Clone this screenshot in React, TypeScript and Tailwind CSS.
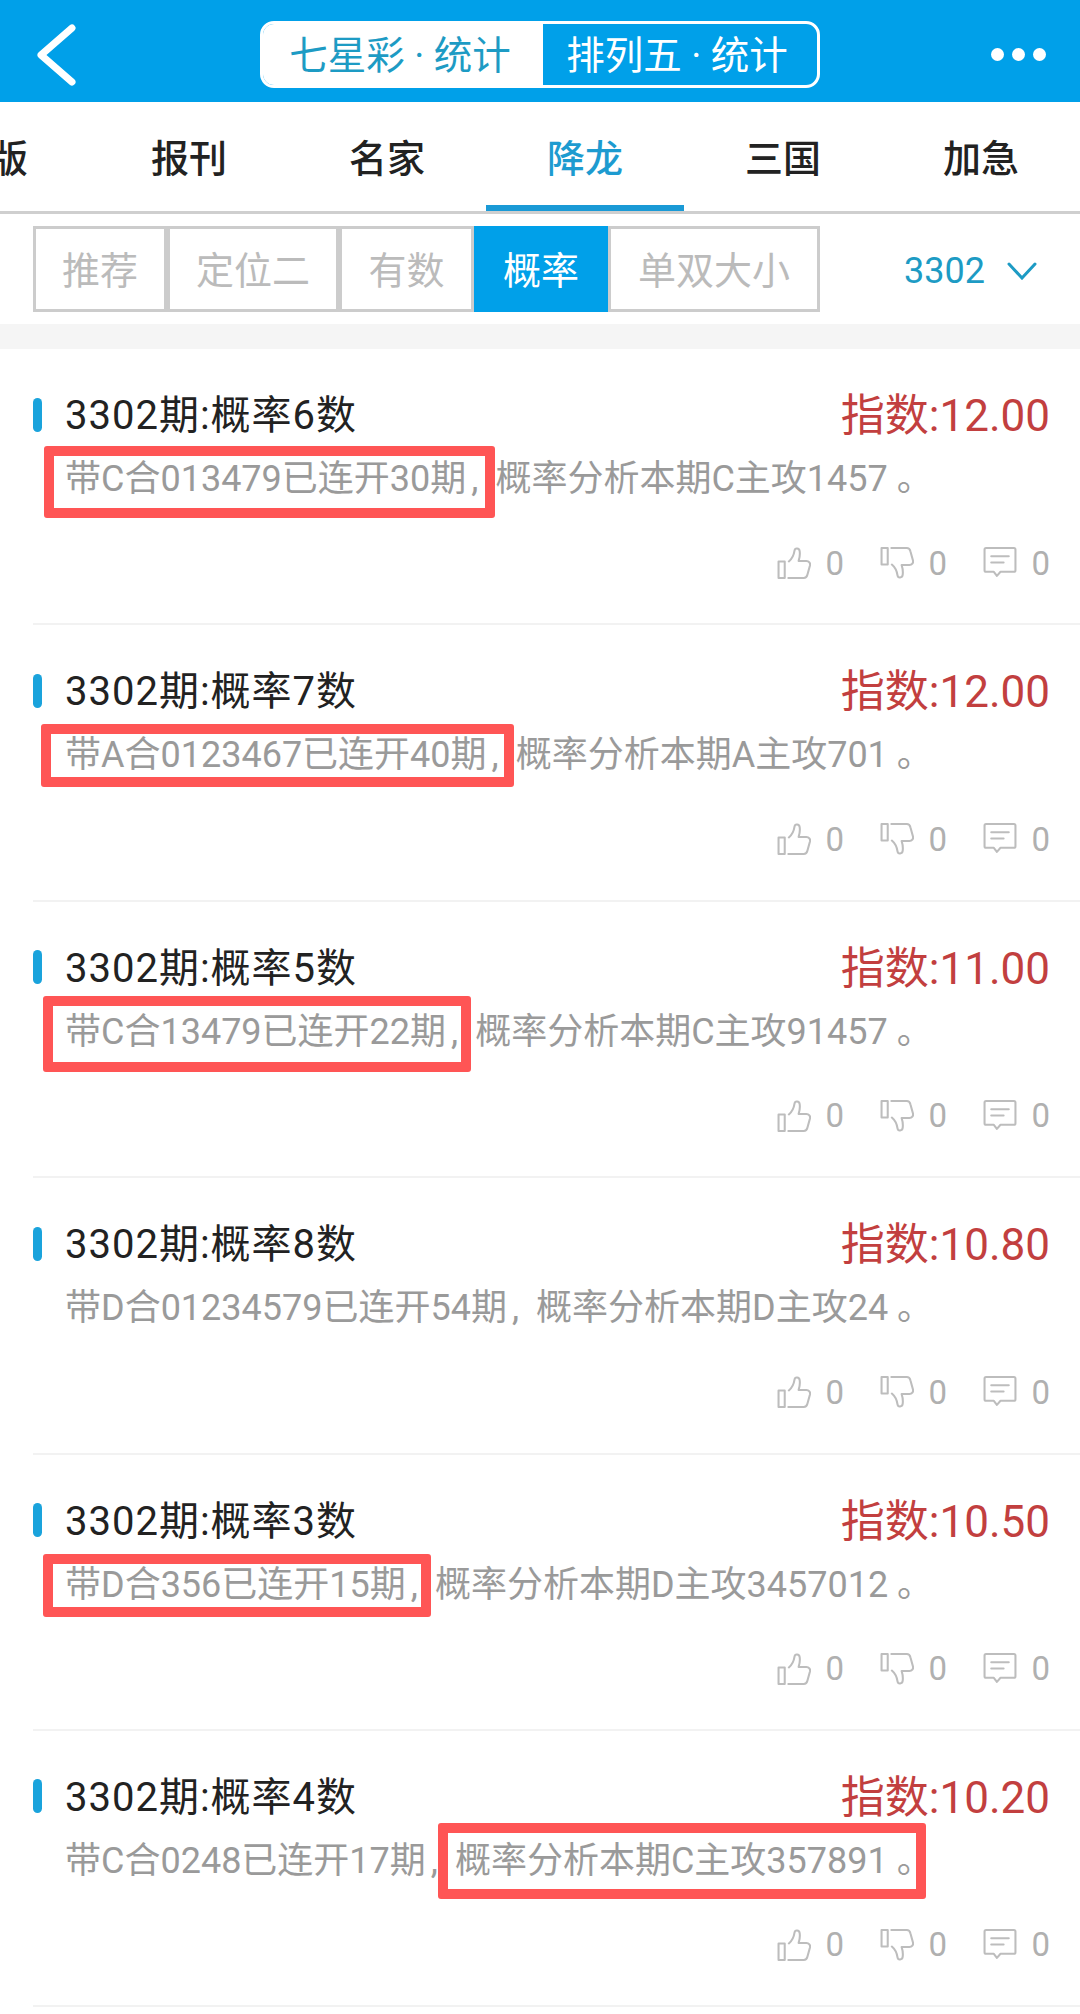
const cjk = "font-['Roboto','Noto_Sans_CJK_SC',sans-serif]";

const subTabs = [
  { label: '推荐', width: 'w-[134px]' },
  { label: '定位二', width: 'w-[172px]' },
  { label: '有数', width: 'w-[135px]' },
  { label: '概率', width: 'w-[134px]', active: true },
  { label: '单双大小', width: 'w-[212px]' },
];

const items = [
  { title: '3302期:概率6数', score: '12.00', lead: '带C合013479已连开30期', rest: '概率分析本期C主攻1457 。', mark: 'lead', box: 'top-[-12px] bottom-[-18px] left-[-21px] right-0' },
  { title: '3302期:概率7数', score: '12.00', lead: '带A合0123467已连开40期', rest: '概率分析本期A主攻701 。', mark: 'lead', box: 'top-[-10px] bottom-[-11px] left-[-24px] right-[2px]' },
  { title: '3302期:概率5数', score: '11.00', lead: '带C合13479已连开22期', rest: '概率分析本期C主攻91457 。', mark: 'lead', box: 'top-[-15px] bottom-[-19px] left-[-22px] right-[4px]' },
  { title: '3302期:概率8数', score: '10.80', lead: '带D合01234579已连开54期', rest: '概率分析本期D主攻24 。', mark: '', box: '' },
  { title: '3302期:概率3数', score: '10.50', lead: '带D合356已连开15期', rest: '概率分析本期D主攻3457012 。', mark: 'lead', box: 'top-[-10px] bottom-[-11px] left-[-22px] right-[4px]' },
  { title: '3302期:概率4数', score: '10.20', lead: '带C合0248已连开17期', rest: '概率分析本期C主攻357891 。', mark: 'rest', box: 'top-[-17px] bottom-[-17px] left-[-17px] right-[7px]' },
];

function ThumbUp({ flip }: { flip?: boolean }) {
  return (
    <svg width="34" height="34" viewBox="0 0 33 33" fill="none" stroke="#bdbdbd" strokeWidth="2" strokeLinejoin="round" strokeLinecap="round" className={flip ? '-scale-y-100' : ''}>
      <path d="M1.5 15h6v16h-6z" />
      <path d="M11 31h15c2 0 3-1 3.500-3l2.500-9c.6-2.500-1-4.500-3.500-4.500H21c1-3 1.500-6 1-9.500-.4-3-4.500-3.500-5-.5-.6 4-2.500 8-5.500 10.500" />
    </svg>
  );
}

function CommentIcon() {
  return (
    <svg width="34" height="34" viewBox="0 0 33 33" fill="none" stroke="#bdbdbd" strokeWidth="2" strokeLinejoin="round" strokeLinecap="round">
      <path d="M3 2h27c1 0 1.500.6 1.500 1.500v20c0 1-.6 1.500-1.500 1.500H17l-3.500 4-3-4H3c-1 0-1.500-.6-1.500-1.500v-20C1.500 2.600 2 2 3 2z" />
      <path d="M8 10h17M8 16h12" />
    </svg>
  );
}

function Stat({ icon }: { icon: React.ReactNode }) {
  return (
    <div className="flex w-[67px] items-center justify-between">
      {icon}
      <span className="text-[33px] leading-none text-[#b0b0b0]">0</span>
    </div>
  );
}

function Marked({ box, children }: { box: string; children: React.ReactNode }) {
  return (
    <span className="relative">
      {children}
      <span className={`absolute rounded-[3px] border-[10px] border-[#ff5555] ${box}`} />
    </span>
  );
}

export default function App() {
  return (
    <div className={`h-[2014px] w-[1080px] overflow-hidden bg-white ${cjk}`}>
      {/* top bar */}
      <header className="relative flex h-[102px] items-center justify-center bg-[#00a0e9]">
        <button className="absolute left-[36px] top-[24px]">
          <svg width="42" height="62" viewBox="0 0 42 62" fill="none" stroke="white" strokeWidth="7" strokeLinecap="round" strokeLinejoin="round">
            <path d="M36 4 5 31l31 27" />
          </svg>
        </button>
        <div className="mt-[6px] flex h-[67px] w-[560px] overflow-hidden rounded-[14px] border-[3px] border-white text-[38.500px] leading-none">
          <div className="flex w-[280px] items-center justify-center bg-white pr-[6px] pt-[4px] text-[#1d9bc4]">七星彩 · 统计</div>
          <div className="flex flex-1 items-center justify-center pr-[6px] pt-[4px] text-white">排列五 · 统计</div>
        </div>
        <div className="absolute right-[34px] top-[48px] flex gap-[8px]">
          <span className="h-[13px] w-[13px] rounded-full bg-white" />
          <span className="h-[13px] w-[13px] rounded-full bg-white" />
          <span className="h-[13px] w-[13px] rounded-full bg-white" />
        </div>
      </header>

      {/* channel tabs */}
      <nav className="flex h-[112px] overflow-hidden border-b-[3px] border-[#cfcfcf] pt-[4px] text-[38px] font-medium leading-none text-[#222]">
        <div className="flex w-[90px] shrink-0 items-center justify-end pr-[62px]">版</div>
        <div className="flex w-[198px] shrink-0 items-center justify-center">报刊</div>
        <div className="flex w-[198px] shrink-0 items-center justify-center">名家</div>
        <div className="relative flex w-[198px] shrink-0 items-center justify-center text-[#1d9bd0]">
          降龙
          <span className="absolute bottom-0 left-0 right-0 h-[6px] bg-[#1a9ad6]" />
        </div>
        <div className="flex w-[198px] shrink-0 items-center justify-center">三国</div>
        <div className="flex w-[198px] shrink-0 items-center justify-center">加急</div>
      </nav>

      {/* filter row */}
      <div className="flex h-[110px] items-start pl-[33px] pt-[12px]">
        <div className="flex h-[86px] w-[787px]">
          {subTabs.map((s) => (
            <div
              key={s.label}
              className={`flex items-center justify-center pt-[4px] text-[38px] leading-none ${s.width} ${s.active ? 'bg-[#00a0e9] text-white' : 'border-[3px] border-[#cccccc] text-[#bbbbbb]'}`}
            >
              {s.label}
            </div>
          ))}
        </div>
        <div className="ml-[84px] flex h-[86px] items-center gap-[22px] pt-[3px] text-[#1d9bc4]">
          <span className="text-[36px] leading-none">3302</span>
          <svg width="30" height="18" viewBox="0 0 30 18" fill="none" stroke="#1d9bc4" strokeWidth="3" strokeLinecap="round">
            <path d="M2 2l13 14L28 2" />
          </svg>
        </div>
      </div>
      <div className="h-[25px] bg-[#f5f5f5]" />

      {/* list */}
      <div className="pl-[33px]">
        {items.map((item) => {
          const lead = (
            <>
              {item.lead}
              <span className="ml-[5px] mr-[17px]">,</span>
            </>
          );
          return (
            <div key={item.title} className="h-[276.400px] border-b-2 border-[#f2f2f2] pr-[30px] pt-[47px]">
              <div className="flex h-[40px] items-center justify-between">
                <div className="flex items-center">
                  <span className="-mt-[3px] h-[34px] w-[9px] rounded-full bg-[#1aa3dc]" />
                  <span className="ml-[23px] text-[40px] leading-none tracking-[1px] text-[#222]">{item.title}</span>
                </div>
                <span className="text-[44px] leading-none text-[#c23f3f]">指数:{item.score}</span>
              </div>
              <p className="mt-[23px] whitespace-nowrap pl-[32px] text-[36px] leading-[40px] text-[#9a9a9a]">
                {item.mark === 'lead' ? <Marked box={item.box}>{lead}</Marked> : lead}
                {item.mark === 'rest' ? <Marked box={item.box}>{item.rest}</Marked> : item.rest}
              </p>
              <div className="mt-[47px] flex justify-end gap-[36px]">
                <Stat icon={<ThumbUp />} />
                <Stat icon={<ThumbUp flip />} />
                <Stat icon={<CommentIcon />} />
              </div>
            </div>
          );
        })}
      </div>
    </div>
  );
}
